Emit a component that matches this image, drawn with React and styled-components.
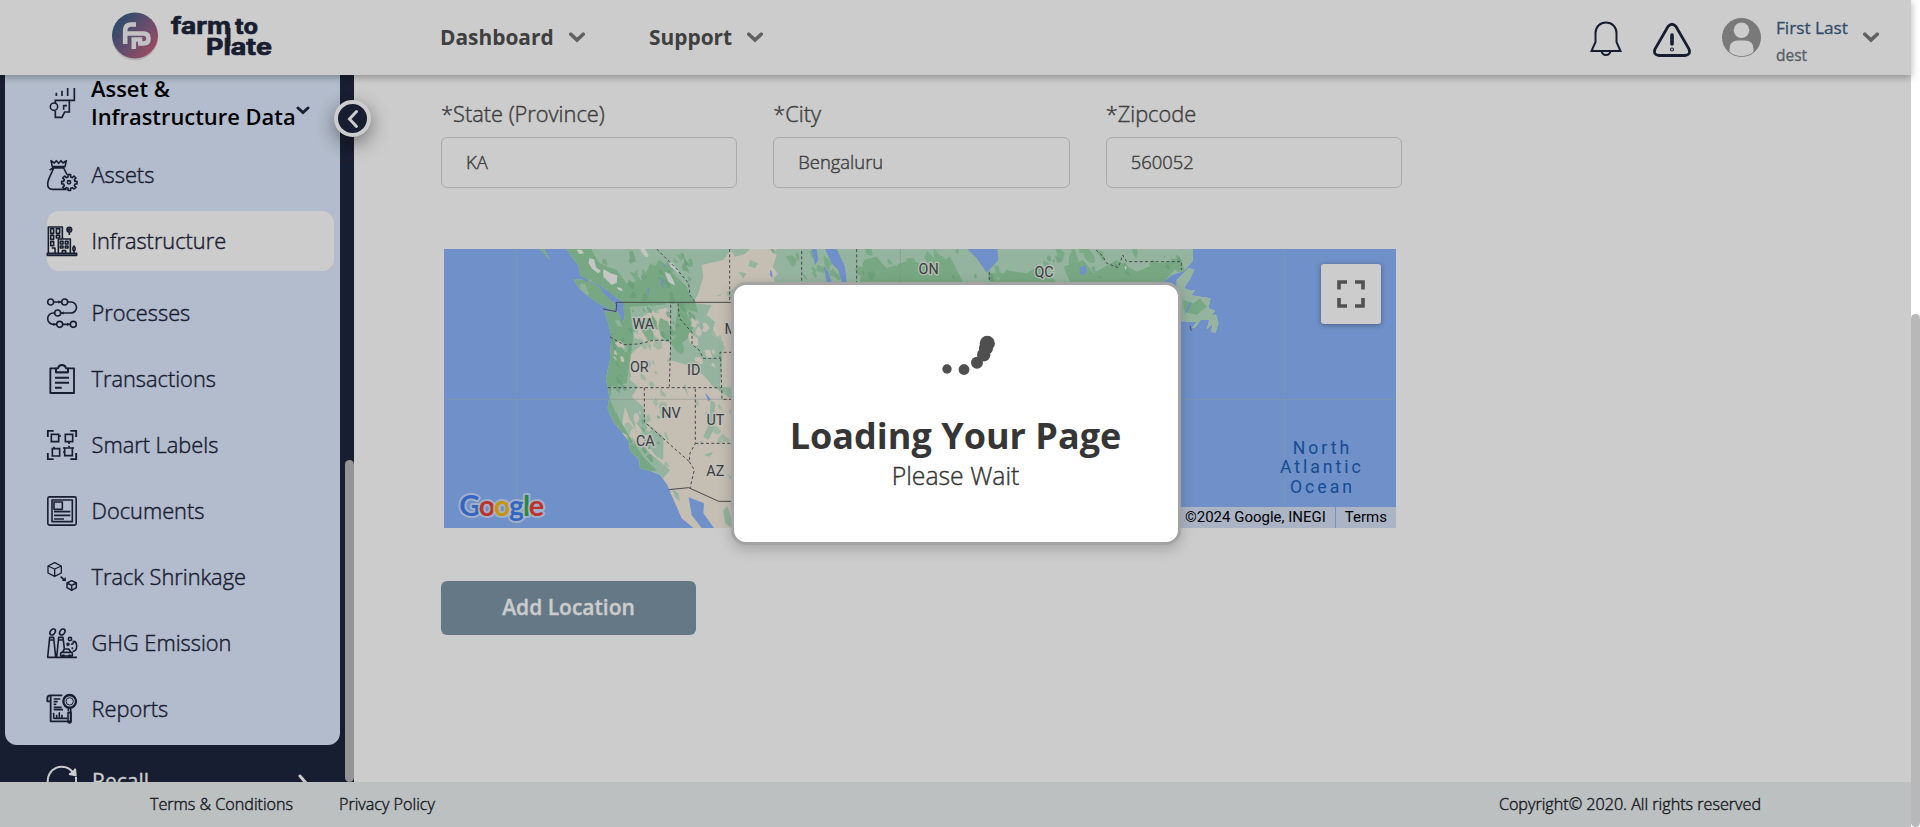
import React from "react";
import styled, { createGlobalStyle, css } from "styled-components";

const Global = createGlobalStyle`
  *, *::before, *::after { box-sizing: border-box; }
  html, body { margin: 0; padding: 0; background: #fff; overflow: hidden; }
  body { font-family: "Open Sans", "Noto Sans", sans-serif; color: #4f4f4f; }
`;

const NAVY = "#1f263e";

/* light weight, slightly thickened */
const lightText = css`
  font-weight: 300;
  -webkit-text-stroke: 0.42px currentColor;
`;

const Window = styled.div`
  display: flex;
  width: 1920px;
  height: 827px;
  overflow: hidden;
`;
const Shell = styled.div`
  position: relative;
  display: flex;
  flex-direction: column;
  width: 1911px;
  background: #fff;
`;
const PageScroll = styled.div`
  width: 9px;
  padding-top: 314px;
`;
const PageThumb = styled.div`
  height: 513px;
  border-radius: 5px;
  background: #b8b8b8;
`;

/* ---------- header ---------- */
const Header = styled.header`
  position: relative;
  z-index: 3;
  display: flex;
  align-items: center;
  flex: none;
  height: 75px;
  padding: 0 32px 0 107px;
  background: #fff;
  box-shadow: 0 2px 8px rgba(0, 0, 0, 0.32);
`;
const Logo = styled.svg`
  display: block;
  flex: none;
  width: 180px;
  height: 75px;
`;
const Nav = styled.nav`
  display: flex;
  gap: 64px;
  margin-left: 153px;
`;
const NavItem = styled.div`
  display: flex;
  align-items: center;
  justify-content: space-between;
  width: ${(p) => p.$w}px;
  padding-bottom: 1px;
  font-size: 20.9px;
  font-weight: 700;
  line-height: 28px;
  white-space: nowrap;
`;
const HeaderTools = styled.div`
  display: flex;
  align-items: center;
  margin-left: auto;
`;
const ToolIcon = styled.svg`
  display: block;
  flex: none;
  width: ${(p) => p.$w}px;
  height: ${(p) => p.$h}px;
  margin-right: ${(p) => p.$gap || 0}px;
  margin-top: ${(p) => p.$top || 0}px;
`;
const Account = styled.div`
  width: 87px;
  padding-top: 9px;
`;
const AccountName = styled.div`
  color: #3e6285;
  font-size: 17.2px;
  line-height: 26px;
  white-space: nowrap;
  -webkit-text-stroke: 0.3px currentColor;
`;
const AccountRole = styled.div`
  color: #6d7780;
  font-size: 15.5px;
  line-height: 28px;
  -webkit-text-stroke: 0.3px currentColor;
`;

/* ---------- body ---------- */
const Body = styled.div`
  display: flex;
  flex: none;
  height: 707px;
`;
const Sidebar = styled.aside`
  position: relative;
  display: flex;
  flex: none;
  width: 354px;
  background: ${NAVY};
`;
const SideColumn = styled.div`
  width: 345px;
  height: 707px;
  padding-left: 5px;
  overflow: hidden;
`;
const SidePanel = styled.div`
  width: 335px;
  height: 670px;
  padding-left: 42px;
  border-radius: 0 0 12px 12px;
  background: #e0ecff;
`;
const SectionHead = styled.div`
  display: flex;
  height: 70px;
  color: #000;
  font-size: 21.9px;
  font-weight: 600;
  line-height: 28px;
`;
const SectionTitle = styled.div`
  width: 205px;
  margin-left: 14px;
  white-space: nowrap;
`;
const SideIcon = styled.svg`
  display: block;
  flex: none;
  width: 30px;
  height: 30px;
  margin-top: ${(p) => p.$top || 0}px;
  overflow: visible;
  fill: none;
  stroke: ${(p) => p.$color || NAVY};
  stroke-width: 4.8;
  stroke-linejoin: round;
`;
const SideItem = styled.div`
  display: flex;
  align-items: center;
  gap: 14.500px;
  width: 287px;
  height: 60px;
  margin-bottom: 6px;
  color: ${NAVY};
  font-size: 21.8px;
  white-space: nowrap;
  ${lightText}
  ${(p) =>
    p.$active &&
    css`
      margin-bottom: 12px;
      border-radius: 12px;
      background: #fff;
    `}
`;
const SideLabel = styled.span`
  padding-bottom: 2px;
`;
const Recall = styled.div`
  display: flex;
  align-items: flex-start;
  gap: 15px;
  padding: 21px 0 0 42px;
  color: #fff;
  font-size: 21px;
  font-weight: 400;
  line-height: 31px;
  -webkit-text-stroke: 0.3px currentColor;
`;
const RecallLabel = styled.span`
  width: 191px;
`;
const SideScroll = styled.div`
  width: 9px;
  padding-top: 385px;
`;
const SideThumb = styled.div`
  height: 322px;
  border-radius: 5px;
  background: #b9b9b9;
`;
const Collapse = styled.button`
  position: absolute;
  top: 25px;
  left: 334px;
  z-index: 4;
  display: flex;
  align-items: center;
  justify-content: center;
  width: 37px;
  height: 37px;
  padding: 0;
  border: 4px solid #fff;
  border-radius: 50%;
  background: ${NAVY};
  box-shadow: 0 6px 20px rgba(0, 0, 0, 0.45);
`;

const Content = styled.main`
  width: 1048px;
  padding: 23px 0 0 87px;
`;
const Fields = styled.div`
  display: grid;
  grid-template-columns: repeat(3, 1fr);
  column-gap: 36px;
  width: 961px;
`;
const Label = styled.div`
  height: 39px;
  font-size: 21.8px;
  line-height: 32px;
  ${lightText}
`;
const Input = styled.div`
  display: flex;
  align-items: center;
  height: 51px;
  padding: 0 0 2px 24px;
  border: 1px solid #d3d6da;
  border-radius: 6px;
  font-size: 18.400px;
  ${lightText}
`;
const MapFrame = styled.div`
  display: flex;
  flex-direction: column;
  align-items: flex-end;
  justify-content: space-between;
  position: relative;
  width: 952px;
  height: 279px;
  margin: 61px 0 0 3px;
  overflow: hidden;
  background: #8bb4fa;
`;
const MapDrawing = styled.svg`
  position: absolute;
  inset: 0;
  width: 952px;
  height: 279px;
`;
const Fullscreen = styled.div`
  position: relative;
  display: flex;
  align-items: center;
  justify-content: center;
  width: 60px;
  height: 60px;
  margin: 15px 15px 0 0;
  border-radius: 3px;
  background: #fff;
  box-shadow: 0 1px 5px rgba(0, 0, 0, 0.35);
`;
const MapTerms = styled.div`
  position: relative;
  display: flex;
  gap: 1px;
  color: #000;
  font-family: Roboto, sans-serif;
  font-size: 15px;
  line-height: 21px;
`;
const Term = styled.span`
  padding: 0 ${(p) => p.$pad}px;
  background: rgba(245, 245, 245, 0.7);
  white-space: nowrap;
`;
const AddButton = styled.button`
  display: block;
  width: 255px;
  height: 54px;
  margin-top: 53px;
  padding: 0 0 2px;
  border: 0;
  border-radius: 6px;
  background: #7f97a8;
  color: #fff;
  font: 600 21px "Open Sans", sans-serif;
  -webkit-text-stroke: 0.3px currentColor;
`;

/* ---------- footer ---------- */
const Footer = styled.footer`
  position: relative;
  z-index: 5;
  display: flex;
  align-items: center;
  flex: none;
  height: 45px;
  padding: 0 150px 2px;
  background: #ecf1f2;
  color: #22242c;
  font-size: 16.150px;
  ${lightText}
`;
const FootLink = styled.span`
  width: ${(p) => p.$w}px;
  white-space: nowrap;
`;
const Copyright = styled.span`
  margin-left: auto;
`;

/* ---------- loading ---------- */
const Overlay = styled.div`
  position: absolute;
  inset: 0;
  z-index: 10;
  display: flex;
  align-items: center;
  justify-content: center;
  background: rgba(0, 0, 0, 0.2);
`;
const Dialog = styled.div`
  display: flex;
  flex-direction: column;
  align-items: center;
  width: 450px;
  height: 263px;
  padding-top: 46px;
  border: 3px solid #a3a3a3;
  border-radius: 15px;
  background: #fff;
  box-shadow: 0 4px 14px rgba(0, 0, 0, 0.2);
`;
const Spinner = styled.svg`
  display: block;
  flex: none;
  width: 60px;
  height: 60px;
  overflow: visible;
`;
const DialogTitle = styled.div`
  margin-top: 20px;
  color: #363636;
  font-size: 36px;
  font-weight: 700;
  line-height: 49px;
  white-space: nowrap;
`;
const DialogText = styled.div`
  margin-top: -1px;
  color: #363636;
  font-size: 24.800px;
  line-height: 33px;
  ${lightText}
`;

const Chevron = ({ color = "#7a7a7a" }) => (
  <svg width="16" height="11" viewBox="0 0 16 11" fill="none">
    <path d="M1.800 2.200 8 8l6.200-5.800" stroke={color} strokeWidth="3.600" strokeLinecap="round" />
  </svg>
);

const icons = {
  assets: (
    <>
      <path d="M12 2l4 18h38l4-18-10 7-6-7-7 8-7-8-6 7zM8 30l10-6h34M20 24C12 45 2 58 2 72q0 16 15 16h42M50 24l10 20" />
      <path d="M62 46h8v7l5 2 5-5 6 6-5 5 2 5h6v8h-6l-2 5 5 5-6 5-5-4-5 2v6h-8v-6l-5-2-5 4-6-5 5-5-2-5h-6v-8h6l2-5-5-5 6-6 5 5 5-2z" transform="translate(1 -2)" />
      <circle cx="66" cy="67" r="5" />
    </>
  ),
  infrastructure: (
    <>
      <path d="M4 82V3h42v36M34 82V39h36v43M1 82h88v6H1z" />
      <path d="M11 8h9v14h-9zM28 8h10v14H28zM11 28h9v12h-9zM28 28h10v8H28zM11 47h9v12h-9zM14 66h10v16M40 46h8v8h-8zM55 46h8v8h-8zM40 60h8v6h-8zM55 60h8v6h-8zM46 82v-8h10v8" />
      <circle cx="67" cy="11" r="7" />
      <circle cx="67" cy="11" r="2" />
      <path d="M67 19v8M81 60q-7 9 0 16 7-7 0-16zM81 74v8" />
    </>
  ),
  processes: (
    <>
      <circle cx="11" cy="12" r="9" />
      <circle cx="53" cy="12" r="9" />
      <circle cx="32" cy="45" r="9" />
      <circle cx="38" cy="79" r="9" />
      <circle cx="79" cy="79" r="9" />
      <path d="M20 12h24M62 12h10a16.500 16.500 0 0 1 0 33H41M23 45h-4a17 17 0 0 0 0 34h10M47 79h23" />
      <path d="M34 7l8 5-8 5zM50 40l-8 5 8 5zM19 74l8 5-8 5zM60 74l8 5-8 5z" fill={NAVY} stroke="none" />
    </>
  ),
  transactions: (
    <>
      <path strokeWidth="5.500" d="M10 13h17v12h36V13h18v74H10z" />
      <path strokeWidth="5.500" d="M27 25V13h6q2-10 12-10t12 10h6v12z" />
      <path strokeWidth="6" d="M24 41h42M24 56h42M24 71h20" />
    </>
  ),
  labels: (
    <>
      <path strokeWidth="5.500" strokeLinejoin="miter" d="M2.500 21V2.500H20M70 2.500h17.500V21M87.500 69v18.500H70M20 87.500H2.500V69" />
      <path strokeWidth="5" strokeLinejoin="miter" d="M13 13h22v22H13zM55 13h22v22H55zM16 56h22v22H16zM53 54h23v23H53z" />
      <path strokeWidth="5" d="M36 18h6M66 36v6M21 50v6M48 66h5M66 47v6M48 54h5M76 54h5" />
    </>
  ),
  documents: (
    <>
      <rect x="2.500" y="2.500" width="85" height="85" rx="5" />
      <rect x="15" y="12" width="61" height="65" />
      <rect x="21" y="18" width="25" height="22" />
      <path d="M21 47h49M21 58h49M21 69h30" />
    </>
  ),
  track: (
    <>
      <path d="M23 2l20 10v21L23 43 3 33V12zM3 12l20 9 20-9M23 21v22" strokeWidth="4" />
      <path d="M74 56l14 7v14l-14 8-14-8V63zM60 63l14 7 14-7M74 70v15" strokeWidth="4.500" />
      <path d="M41 44l10 9" />
      <path d="M56 45l1 13-13-2z" fill={NAVY} stroke="none" />
    </>
  ),
  ghg: (
    <>
      <path d="M2 88l6-60h12l6 60M29 88l6-60h13l4 34M0 88h90M7 36h14M35 36h14" />
      <ellipse cx="17" cy="12" rx="7" ry="10" transform="rotate(35 17 12)" />
      <ellipse cx="46" cy="12" rx="7" ry="10" transform="rotate(35 46 12)" />
      <path d="M41 84V75l6-3 5-9h13l6 9 5 3v9zM48 73h22" />
      <circle cx="49" cy="84" r="3" />
      <circle cx="68" cy="84" r="3" />
      <circle cx="69" cy="33" r="5" />
      <circle cx="63" cy="49" r="3" />
      <path d="M72 48q8 2 7-8 10 0 10 14 0 16-12 16M76 58v6" />
    </>
  ),
  reports: (
    <>
      <path d="M46 4H8q-7 1-7 9v9h10v60h60V50M11 22V5M11 82h56" strokeWidth="5.500" />
      <path d="M20 15h20M20 23h12M20 31h8M20 40h24M20 47h28M20 74V56M20 73h42M29 72V62M37 72V55M45 72V62" />
      <circle cx="68" cy="22" r="19" strokeWidth="7" />
      <circle cx="68" cy="22" r="11" strokeWidth="3" />
      <path d="M64 42v10M71 42v10M63 56h9v28q-4 6-9 0z" />
    </>
  ),
  section: (
    <>
      <path d="M28 14v10M45 8v16M62 0v24M82 0v37H25v8M25 68v20h20l8-16h14V38" strokeLinejoin="miter" strokeWidth="5" />
      <circle cx="21" cy="56" r="11" />
      <path d="M50 65V53h10" />
    </>
  ),
};

const menu = [
  ["assets", "Assets"],
  ["infrastructure", "Infrastructure", true],
  ["processes", "Processes"],
  ["transactions", "Transactions"],
  ["labels", "Smart Labels"],
  ["documents", "Documents"],
  ["track", "Track Shrinkage"],
  ["ghg", "GHG Emission"],
  ["reports", "Reports"],
];

const fields = [
  ["*State (Province)", "KA"],
  ["*City", "Bengaluru"],
  ["*Zipcode", "560052"],
];

const states = [
  ["WA", 640, 268],
  ["OR", 628, 396],
  ["ID", 791, 404],
  ["NV", 723, 533],
  ["UT", 856, 556],
  ["CA", 646, 617],
  ["AZ", 856, 709],
  ["MT", 915, 281],
  ["ON", 1496, 102],
  ["QC", 1842, 111],
];

/* Terrain flecks: small irregular polygons spread over a box [x0, y0, x1, y1]. */
const flecks = (seed, count, [x0, y0, x1, y1], size) => {
  let s = seed;
  const rnd = () => {
    s = (s * 16807) % 2147483647;
    return s / 2147483647;
  };
  let d = "";
  for (let i = 0; i < count; i += 1) {
    const cx = x0 + rnd() * (x1 - x0);
    const cy = y0 + rnd() * (y1 - y0);
    const r = size * (0.4 + rnd());
    for (let k = 0; k < 7; k += 1) {
      const a = (k / 7) * Math.PI * 2;
      const q = r * (0.35 + rnd() * 0.9);
      const px = cx + Math.cos(a) * q * 0.8 + Math.sin(a) * q * 0.4;
      const py = cy + Math.sin(a) * q * 1.2;
      d += `${k ? "L" : "M"}${px.toFixed(0)} ${py.toFixed(0)}`;
    }
    d += "Z";
  }
  return d;
};

const WEST =
  "M410 27L432 60 445 75 452 112 478 122 512 138 545 165 572 180 578 190 584 235 578 245 562 215 524 215 538 262 544 290 540 360 528 415 538 470 533 505 550 545 582 585 597 605 600 632 628 660 630 685 660 692 690 705 712 735 720 755 740 800 755 835 790 864H1000V27Z";
const ISLAND = "M430 117L470 121 520 150 548 180 556 205 545 210 505 190 470 165 445 142Z";
const EAST = "M998 27H2289V62L2262 92 2225 105 2195 130H998Z";
const NEWFOUNDLAND =
  "M2275 85L2293 88 2281 115 2262 145 2285 152 2295 150 2284 166 2320 172 2342 175 2335 205 2355 212 2345 225 2358 224 2366 250 2356 278 2343 275 2348 252 2330 268 2338 240 2312 240 2296 262 2285 265 2300 246 2240 243V120Z";

const MapArt = () => (
  <MapDrawing viewBox="42 27 2856 837">
    <defs>
      <clipPath id="land">
        <path d={WEST} />
        <path d={ISLAND} />
        <path d={EAST} />
        <path d={NEWFOUNDLAND} />
        <path d="M330 27h12l18 33z" />
      </clipPath>
    </defs>
    <g clipPath="url(#land)">
      <path fill="#f6eee0" d="M300 27H2400V864H300z" />
      <path fill="#bbe2c7" d="M300 27H905L880 60 815 75 820 110 805 160 790 190 845 195 830 225 855 245 845 285 880 305 870 440 905 443V478L850 440 820 405 790 380 720 360 722 310 690 300 720 270 722 200 660 215 625 240 610 290 640 310 600 345 600 420 625 440 605 470 640 500 650 550 700 590 700 660 680 650 640 600 600 540 585 500 575 560 600 590 660 640 720 690 700 715 300 720Z" />
      <path fill="#bbe2c7" d="M1040 27H2400V300H2200L2180 130H1040L1015 100 1040 95 1010 60Z" />
      <path fill="#96d3a4" d="M300 27H480L510 70 560 90 590 130 640 120 660 70 690 60 740 110 770 140 790 190 760 200 790 260 780 290 740 320 735 260 745 190 690 195 600 200 610 290 605 330 590 430 545 440 540 480 570 540 600 590 640 650 680 690 640 700 300 700Z" />
      <path fill="#96d3a4" d="M1290 127L1300 60 1340 50 1370 85 1440 60 1500 80 1560 50 1600 127ZM1700 127L1730 90 1790 100 1830 75 1880 127ZM1900 80L1960 60 1990 100 2060 60 2120 95 2180 70 2260 60 2200 127H1920ZM2260 180L2290 190 2310 175 2330 200 2300 225 2260 215Z" />
      <path fill="#96d3a4" opacity=".9" d={flecks(11, 34, [480, 30, 800, 330], 20) + flecks(51, 26, [1290, 30, 2290, 125], 20) + flecks(15, 12, [1010, 30, 1290, 125], 14)} />
      <path fill="#bbe2c7" opacity=".8" d={flecks(23, 22, [450, 30, 780, 320], 14) + flecks(24, 14, [560, 460, 720, 680], 15) + flecks(77, 22, [1290, 30, 2350, 250], 14) + flecks(91, 14, [800, 40, 1010, 330], 16) + flecks(93, 8, [800, 450, 905, 620], 13) + flecks(97, 6, [640, 330, 720, 440], 15)} />
      <path fill="#7fc293" opacity=".6" d={flecks(31, 34, [600, 40, 790, 310], 11) + flecks(32, 14, [545, 240, 605, 450], 9) + flecks(38, 12, [600, 520, 700, 660], 8) + flecks(36, 20, [1300, 40, 2280, 120], 10)} />
      <path fill="#f6eee0" d={"M905 27H1010L1040 45 1025 90 1045 100 1020 127 960 127 905 150 850 170 810 182 815 140 850 130 845 100 870 95 890 60Z" + flecks(41, 12, [790, 210, 900, 430], 12) + flecks(43, 8, [580, 480, 660, 640], 12) + flecks(44, 5, [556, 300, 580, 370], 9)} />
      <path fill="#bbe2c7" d="M900 27H960L945 42 915 50ZM960 60L985 70 975 85 955 78ZM925 95L950 100 940 115Z" />
      <path fill="#bbe2c7" d="M880 810L892 798 905 840V864L885 850ZM725 745L745 760 750 785 735 770ZM820 590L838 550 842 480 856 490 850 570 835 600ZM890 700L905 712V722ZM820 645L850 635 840 650ZM760 440L765 430 775 470Z" />
      <path fill="#f7f7f7" d="M478 55L492 58 498 82 512 92 505 100 486 86 476 70ZM520 88L542 100 562 106 560 128 545 135 520 110ZM630 27H645L656 48 648 52 636 38ZM705 95L720 103 732 125 735 137 716 126 708 108ZM715 65L728 70 747 95 744 98 722 80ZM668 472L677 466 674 478 668 484ZM440 30H455L462 40 448 42ZM560 142L574 144 578 154 566 150ZM2082 80L2090 78 2088 92Z" />
    </g>
    <g fill="#8bb4fa">
      <path d="M510 140L532 152 562 178 580 190 582 235 575 240 563 195 540 178 520 160ZM445 104L476 121 470 126 444 112ZM776 772L822 790 820 820 852 864H815L785 825ZM825 458L843 478 835 484ZM695 112L700 117 697 145 693 133ZM655 140L659 144 655 164 652 156ZM700 70L708 76 702 82Z" />
      <path d="M1612 27H1702L1705 60 1670 98 1640 55ZM1185 27H1220L1245 80 1250 127H1235L1225 90 1205 70ZM1145 27H1160L1165 60 1155 75ZM1180 75L1195 95 1205 127H1190ZM1950 82L1966 75 1970 98 1955 106 1948 98ZM1020 90L1026 96 1028 114 1020 106ZM2262 225L2280 185 2285 190 2275 210Z" />
    </g>
    <g fill="none" stroke="#9fb9de" strokeWidth="3" opacity=".8">
      <path d="M42 478h495M259 27v837M2250 478h648M2563 27v837" />
    </g>
    <path fill="none" stroke="#a3aea8" strokeWidth="2" opacity=".7" d="M540 478h365M1411 27v100" />
    <g fill="none" stroke="#5b5d60" strokeWidth="3">
      <path d="M520 207L558 215 560 195 558 187H1000M716 749L776 743 866 784H920" />
      <path
        strokeDasharray="9 7"
        d="M540 290L580 314 625 312 670 301H722V190M722 305L718 440M744 190L748 235 786 277V313L808 331 820 355H870V337H920M872 355L876 478H920M533 443H872M643 443V545L778 665 780 640 796 610V443M796 610H910M778 665L793 690 780 745M680 27L740 87 776 130 780 165 796 187M899 27V187M1115 33V127M1280 27V127M1678 95V127M1998 30L2018 48 2030 70 2065 83 2078 45 2090 65H2254V90"
      />
      <path d="M2280 258l4 14" />
    </g>
    <g fontFamily="Roboto, sans-serif" fontSize="43" textAnchor="middle" fill="#4a4d50" stroke="#f4f4f0" strokeWidth="9" strokeOpacity=".75" strokeLinejoin="round" paintOrder="stroke">
      {states.map(([name, x, y]) => (
        <text key={name} x={x} y={y}>{name}</text>
      ))}
    </g>
    <g fontFamily="Roboto, sans-serif" fontSize="53" fill="#1d5fb8" textAnchor="middle">
      <text x="2673" y="641" textLength="170">North</text>
      <text x="2671" y="700" textLength="242">Atlantic</text>
      <text x="2673" y="758" textLength="186">Ocean</text>
    </g>
    <text x="88" y="827" textLength="254" fontFamily="Lato, sans-serif" fontWeight="700" fontSize="86" strokeWidth="12" stroke="#e8eefb" strokeOpacity=".7" strokeLinejoin="round" paintOrder="stroke">
      <tspan fill="#4080f4">G</tspan>
      <tspan fill="#ea4035">o</tspan>
      <tspan fill="#fabb05">o</tspan>
      <tspan fill="#4080f4">g</tspan>
      <tspan fill="#34a853">l</tspan>
      <tspan fill="#ea4035">e</tspan>
    </text>
  </MapDrawing>
);

export default function App() {
  return (
    <Window>
      <Global />
      <Shell>
        <Header>
          <Logo viewBox="0 0 180 75">
            <defs>
              <linearGradient id="mark" x1="0" y1="0.1" x2="1" y2="0.9">
                <stop offset="0" stopColor="#255f85" />
                <stop offset=".5" stopColor="#7c6188" />
                <stop offset="1" stopColor="#cf6078" />
              </linearGradient>
            </defs>
            <circle cx="28" cy="37.500" r="23" fill="#000" opacity=".12" />
            <circle cx="28" cy="35.500" r="23" fill="url(#mark)" />
            <path d="M18.200 44V30.500q0-6 6-6H29M18.200 33.500h18.300q5 0 5 5t-5 5H31M26.800 49V39.500h8.500" fill="none" stroke="#f4f2f6" strokeWidth="4.600" />
            <g fill={NAVY} stroke={NAVY} strokeWidth=".7" fontFamily="Inter, sans-serif" fontWeight="700">
              <text x="64" y="34" fontSize="23" textLength="60" lengthAdjust="spacingAndGlyphs">farm</text>
              <text x="128" y="34" fontSize="22" textLength="23" lengthAdjust="spacingAndGlyphs">to</text>
              <text x="99" y="54.500" fontSize="23" textLength="66" lengthAdjust="spacingAndGlyphs">Plate</text>
            </g>
            <path d="M121.500 28v18" stroke={NAVY} strokeWidth="4" />
          </Logo>
          <Nav>
            <NavItem $w={145}>Dashboard <Chevron /></NavItem>
            <NavItem $w={114}>Support <Chevron /></NavItem>
          </Nav>
          <HeaderTools>
            <ToolIcon $w={32} $h={36} $gap={31} viewBox="0 0 32 36" fill="none" stroke={NAVY} strokeWidth="2">
              <path d="M16 2.500c-6 0-10.500 4.500-10.500 10.500v9L1.500 31h29l-4-9v-9c0-6-4.500-10.500-10.500-10.500zM11.500 31q.8 4 4.500 4t4.500-4" />
            </ToolIcon>
            <ToolIcon $w={38} $h={34} $gap={31} $top={5} viewBox="0 0 38 34" fill="none" stroke={NAVY} strokeWidth="2.800" strokeLinecap="round">
              <path d="M15 3.500Q19 -1 23 3.500L36 26q2 6-4 6.500H6Q0 32 2 26z" />
              <path d="M19 12v9" strokeWidth="3.600" />
              <circle cx="19" cy="26.500" r=".5" strokeWidth="3" />
            </ToolIcon>
            <ToolIcon $w={39} $h={39} $gap={15} viewBox="0 0 39 39">
              <clipPath id="avatar"><circle cx="19.500" cy="19.500" r="18.700" /></clipPath>
              <circle cx="19.500" cy="19.500" r="19.500" fill="#989898" />
              <g fill="#fff" clipPath="url(#avatar)">
                <circle cx="19.500" cy="12.300" r="7.800" />
                <path d="M7.500 40V31q0-8.500 8.500-8.500h7q8.500 0 8.500 8.500v9z" />
              </g>
            </ToolIcon>
            <Account>
              <AccountName>First Last</AccountName>
              <AccountRole>dest</AccountRole>
            </Account>
            <Chevron />
          </HeaderTools>
        </Header>
        <Body>
          <Sidebar>
            <SideColumn>
              <SidePanel>
                <SectionHead>
                  <SideIcon $top={13} viewBox="0 0 90 90">{icons.section}</SideIcon>
                  <SectionTitle>Asset &amp;<br />Infrastructure Data</SectionTitle>
                  <ToolIcon $w={14} $h={10} $top={31} viewBox="0 0 14 10" fill="none">
                    <path d="M2 2l5 4.500L12 2" stroke={NAVY} strokeWidth="3" strokeLinecap="round" />
                  </ToolIcon>
                </SectionHead>
                {menu.map(([icon, label, active]) => (
                  <SideItem key={icon} $active={active}>
                    <SideIcon viewBox="0 0 90 90">{icons[icon]}</SideIcon>
                    <SideLabel>{label}</SideLabel>
                  </SideItem>
                ))}
              </SidePanel>
              <Recall>
                <SideIcon $color="#fff" viewBox="0 0 90 90">
                  <path strokeWidth="6" d="M3 52A42 42 0 0 1 80 22M87 32v20" />
                  <path strokeWidth="6" fill="#fff" d="M84 8l2 20-20-4" />
                </SideIcon>
                <RecallLabel>Recall</RecallLabel>
                <ToolIcon $w={10} $h={18} $top={8} viewBox="0 0 10 18" fill="none">
                  <path d="M2 2l6 7-6 7" stroke="#fff" strokeWidth="3" strokeLinecap="round" />
                </ToolIcon>
              </Recall>
            </SideColumn>
            <SideScroll><SideThumb /></SideScroll>
            <Collapse>
              <svg width="12" height="20" viewBox="0 0 12 20" fill="none">
                <path d="M9.500 2.500L2.500 10l7 7.500" stroke="#fff" strokeWidth="3" strokeLinecap="round" />
              </svg>
            </Collapse>
          </Sidebar>
          <Content>
            <Fields>
              {fields.map(([label, value]) => (
                <div key={label}>
                  <Label>{label}</Label>
                  <Input>{value}</Input>
                </div>
              ))}
            </Fields>
            <MapFrame>
              <MapArt />
              <Fullscreen>
                <svg width="28" height="28" viewBox="0 0 28 28" fill="none" stroke="#666" strokeWidth="3.600">
                  <path d="M2 9.500V2h8M18 2h8v7.500M26 18v8h-8M10 26H2v-8" />
                </svg>
              </Fullscreen>
              <MapTerms>
                <Term $pad={9}>Map data ©2024 Google, INEGI</Term>
                <Term $pad={9}>Terms</Term>
              </MapTerms>
            </MapFrame>
            <AddButton>Add Location</AddButton>
          </Content>
        </Body>
        <Footer>
          <FootLink $w={189}>Terms &amp; Conditions</FootLink>
          <FootLink $w={110}>Privacy Policy</FootLink>
          <Copyright>Copyright© 2020. All rights reserved</Copyright>
        </Footer>
        <Overlay>
          <Dialog>
            <Spinner viewBox="0 0 60 60" fill="#4f4f4f">
              <circle cx="21" cy="38" r="4.700" />
              <circle cx="38" cy="38.500" r="5.400" />
              <circle cx="51" cy="31.700" r="6" />
              <circle cx="57.700" cy="23.700" r="6.700" />
              <circle cx="60" cy="17" r="7.100" />
              <circle cx="61.300" cy="12.400" r="7.600" />
            </Spinner>
            <DialogTitle>Loading Your Page</DialogTitle>
            <DialogText>Please Wait</DialogText>
          </Dialog>
        </Overlay>
      </Shell>
      <PageScroll><PageThumb /></PageScroll>
    </Window>
  );
}
